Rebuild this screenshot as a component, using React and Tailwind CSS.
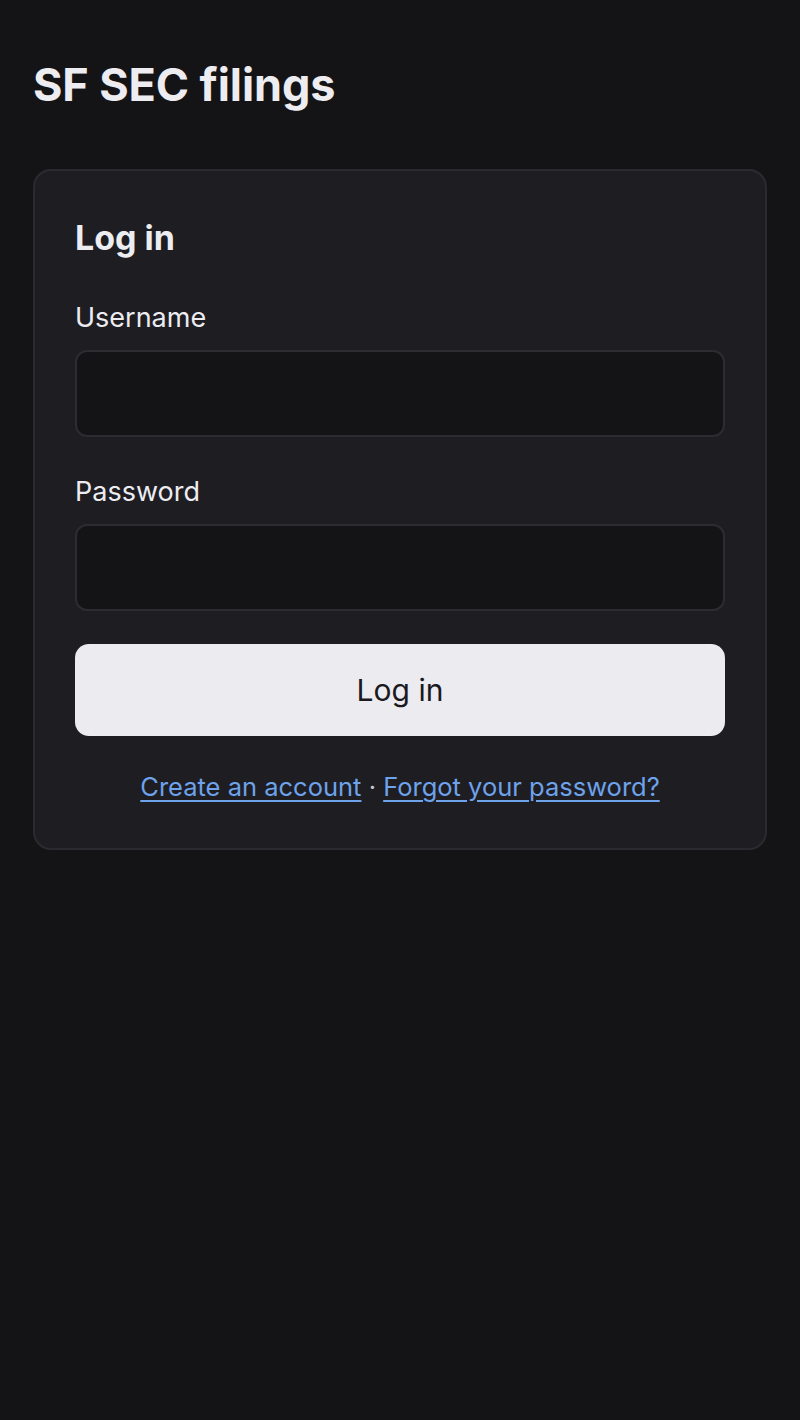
export default function App() {
  return (
    <div className="min-h-[1420px] bg-[#141417] text-[#ececf1] px-[33px] pt-[57px]" style={{ fontFamily: "Inter, 'Noto Sans', sans-serif" }}>
      <h1 className="text-[45px] font-bold leading-[56px] tracking-[-0.1px]">SF SEC filings</h1>
      <div className="mt-[56px] rounded-[18px] border-2 border-[#2a2a30] bg-[#1d1d22] px-[40px] pt-[43px] pb-[43px]">
        <h2 className="text-[34px] font-bold leading-[48px]">Log in</h2>
        <div className="mt-[38px]">
          <label className="block text-[27px] leading-[36px]">Username</label>
          <input type="text" className="mt-[14px] block w-full h-[87px] rounded-[12px] border-2 border-[#2c2c32] bg-[#141417] px-4 text-[24px] outline-none" />
        </div>
        <div className="mt-[37px]">
          <label className="block text-[27px] leading-[36px]">Password</label>
          <input type="password" className="mt-[14px] block w-full h-[87px] rounded-[12px] border-2 border-[#2c2c32] bg-[#141417] px-4 text-[24px] outline-none" />
        </div>
        <button className="mt-[33px] w-full h-[92px] rounded-[14px] bg-[#ebebf0] text-[#1a1a1e] text-[30px]">Log in</button>
        <div className="mt-[33px] text-center text-[25.5px] leading-[36px]">
          <a href="#" className="text-[#6ea2ea] underline underline-offset-[4px]">Create an account</a>
          <span className="text-[#c8c8d0]"> · </span>
          <a href="#" className="text-[#6ea2ea] underline underline-offset-[4px]">Forgot your password?</a>
        </div>
      </div>
    </div>
  );
}
